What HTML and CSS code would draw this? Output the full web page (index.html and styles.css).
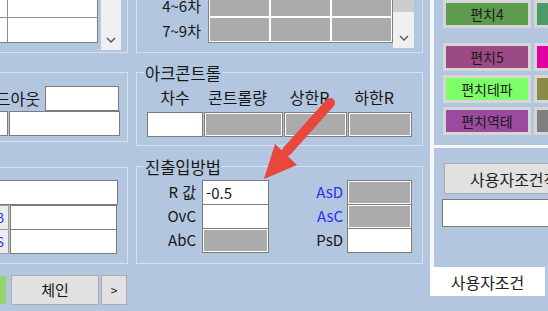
FILE: index.html
```html
<!DOCTYPE html>
<html lang="ko">
<head>
    <meta charset="UTF-8">
    <meta name="viewport" content="width=device-width, initial-scale=1.0">
    <title>진출입방법</title>
    <link rel="stylesheet" href="styles.css">
</head>
<body>
    <div class="window">
        <!-- left column (cut off by the window edge) -->
        <div class="col col-left">
            <div class="group top">
                <div class="table table-left">
                    <span class="cell"></span><span class="cell"></span>
                    <span class="cell"></span><span class="cell"></span>
                </div>
                <div class="vscroll">
                    <svg class="chev" width="10" height="6" viewBox="0 0 10 6"><polyline points="1,1 5,5 9,1"/></svg>
                </div>
            </div>
            <div class="group lead">
                <div class="line">
                    <span class="lbl-lead">리드아웃</span>
                    <span class="box box-lead"></span>
                </div>
                <div class="line">
                    <span class="box box-stub"></span>
                    <span class="box box-long"></span>
                </div>
            </div>
            <div class="group misc">
                <span class="box box-full"></span>
                <div class="line"><span class="tag">B</span><span class="box box-mid"></span></div>
                <div class="line"><span class="tag">S</span><span class="box box-mid"></span></div>
            </div>
            <div class="btn-row">
                <button class="btn btn-green"></button>
                <button class="btn btn-chain">체인</button>
                <button class="btn btn-next">&gt;</button>
            </div>
        </div>

        <!-- middle column -->
        <div class="col col-mid">
            <div class="group top">
                <div class="row-labels"><span>4~6차</span><span>7~9차</span></div>
                <div class="table table-mid">
                    <span class="cell"></span><span class="cell"></span><span class="cell"></span>
                    <span class="cell"></span><span class="cell"></span><span class="cell"></span>
                </div>
                <div class="vscroll">
                    <span class="thumb"></span>
                    <svg class="chev" width="10" height="6" viewBox="0 0 10 6"><polyline points="1,1 5,5 9,1"/></svg>
                </div>
            </div>
            <div class="group arc">
                <span class="legend">아크콘트롤</span>
                <div class="arc-grid">
                    <span class="hdr">차수</span>
                    <span class="hdr shift">콘트롤량</span>
                    <span class="hdr shift">상한R</span>
                    <span class="hdr shift">하한R</span>
                    <span class="box"></span>
                    <span class="box grey"></span>
                    <span class="box grey"></span>
                    <span class="box grey"></span>
                </div>
            </div>
            <div class="group io">
                <span class="legend">진출입방법</span>
                <div class="io-grid">
                    <span class="lbl">R 값</span><span class="box val">-0.5</span>
                    <span class="lbl r blue">AsD</span><span class="box grey"></span>
                    <span class="lbl">OvC</span><span class="box"></span>
                    <span class="lbl r blue">AsC</span><span class="box grey"></span>
                    <span class="lbl">AbC</span><span class="box grey"></span>
                    <span class="lbl r">PsD</span><span class="box"></span>
                </div>
            </div>
        </div>

        <!-- right column: tab pages -->
        <div class="col col-right">
            <div class="page page-top">
                <div class="crow"><span class="cbtn p4">편치4</span><span class="swatch s4"></span></div>
                <div class="crow gap"><span class="cbtn p5">편치5</span><span class="swatch s5"></span></div>
                <div class="crow"><span class="cbtn pt">편치테파</span><span class="swatch st"></span></div>
                <div class="crow"><span class="cbtn pr">편치역테</span><span class="swatch sr"></span></div>
            </div>
            <div class="page page-bottom">
                <button class="btn btn-apply">사용자조건적용</button>
                <span class="box box-user"></span>
            </div>
            <div class="tab">사용자조건</div>
        </div>
    </div>

    <svg class="arrow" width="548" height="311" viewBox="0 0 548 311">
        <line x1="330" y1="103" x2="287" y2="151" stroke="#e8473b" stroke-width="10" stroke-linecap="round"/>
        <polygon points="264,179 275,144 297,165" fill="#e8473b"/>
    </svg>
</body>
</html>
```

FILE: styles.css
```css
* { box-sizing: border-box; }
body { margin: 0; width: 548px; height: 311px; overflow: hidden; position: relative; background: #b2c6df; color: #161616; font-family: "Noto Sans CJK KR", "Noto Sans", sans-serif; font-size: 16px; line-height: 20px; }
button { font: inherit; color: inherit; margin: 0; padding: 0; }

.window { display: flex; align-items: flex-start; }
.col { display: flex; flex-direction: column; flex: none; }
.col-left { width: 148px; margin-left: -20px; }
.col-mid { width: 287px; margin-left: 8px; }
.col-right { width: 118px; margin-left: 7px; }

/* group boxes */
.group { border: 1px solid #d7e1ec; flex: none; }
.legend { display: block; width: max-content; height: 20px; margin: -10px 0 0 7px; padding: 0 1px; background: #b2c6df; font-size: 16.5px; }

.box { display: block; flex: none; height: 25px; background: #fff; border: 1px solid #7c7c7c; }
.box.grey { background: #ababab; box-shadow: inset 0 0 0 1px #fff; }
.line { display: flex; }

/* top groups with grids */
.top { margin-top: -20px; height: 73px; display: flex; align-items: flex-end; padding: 0 8px 9px 0; }
.col-left .top { padding-right: 6px; }
.table { display: grid; flex: none; }
.table-left { flex: 1; grid-template-columns: 25px 1fr; grid-auto-rows: 24px; gap: 1px; background: #8e8e8e; border: 1px solid #7e7e7e; }
.table-left .cell { background: #fff; }
.table-mid { grid-template-columns: repeat(3, 59px); grid-auto-rows: 23px; gap: 2px; padding: 1px; background: #fff; border: 1px solid #828282; }
.table-mid .cell { background: #ababab; }
.row-labels { flex: none; width: 64px; margin-right: 7px; display: flex; flex-direction: column; text-align: right; font-size: 15px; }
.row-labels span { height: 25px; line-height: 25px; }

.vscroll { flex: none; width: 20px; height: 70px; margin: 0 0 -7px 3px; padding-bottom: 7px; background: #f0f0f0; display: flex; flex-direction: column; align-items: center; justify-content: flex-end; }
.col-mid .vscroll { width: 21px; margin: 0 0 -5px 0; }
.thumb { width: 100%; height: 34px; margin-bottom: auto; background: #cdcdcd; }
.chev polyline { fill: none; stroke: #5f5f5f; stroke-width: 1.5; }

/* left column */
.lead { margin-top: 19px; height: 70px; padding-top: 13px; }
.lbl-lead { flex: none; width: 59px; margin-right: 5px; text-align: right; line-height: 25px; white-space: nowrap; }
.box-lead { width: 74px; }
.box-stub { width: 27px; margin-right: 1px; }
.box-long { width: 111px; }

.misc { margin-top: 25px; height: 97px; padding-top: 12px; }
.box-full { width: 137px; }
.tag { flex: none; width: 28px; height: 25px; margin-right: 1px; padding-right: 4px; background: #ececec; border: 1px solid #a0a0a0; color: #2d2df5; text-align: right; font-size: 13px; line-height: 23px; }
.box-mid { width: 107px; }
.misc .line + .line { margin-top: -1px; }

.btn-row { display: flex; margin-top: 11px; }
.btn { flex: none; height: 30px; background: #e1e1e1; border: 1px solid #adadad; }
.btn-green { width: 27px; margin-right: 4px; background: #92d36c; border-color: #c4c4c4; }
.btn-chain { width: 88px; margin-right: 2px; font-size: 15px; }
.btn-next { width: 26px; font-size: 12px; }

/* middle column */
.arc { margin-top: 19px; height: 74px; }
.arc-grid { display: grid; grid-template-columns: 56px 79px 63px 64px; grid-template-rows: 20px 25px; column-gap: 1px; row-gap: 5px; margin-top: 4px; padding-left: 10px; }
.hdr { text-align: center; white-space: nowrap; }
.hdr.shift { padding-right: 12px; }

.io { margin-top: 20px; height: 98px; }
.io-grid { display: grid; grid-template-columns: 65px 67px 78px 65px; grid-auto-rows: 24px; margin-top: 3px; font-size: 15px; }
.io-grid .lbl { display: flex; align-items: center; justify-content: flex-end; padding-right: 6px; }
.io-grid .lbl.r { padding-right: 4px; }
.blue { color: #2d2df5; }
.val { padding-left: 3px; line-height: 23px; }

/* right column */
.page { flex: none; border-left: 4px solid #f5f7fa; }
.page-top { height: 148px; padding-left: 9px; border-bottom: 3px solid #f5f7fa; }
.crow { display: flex; height: 28px; margin-top: 4px; }
.crow:first-child { margin-top: 0; }
.crow.gap { margin-top: 15px; }
.cbtn { flex: none; width: 88px; display: flex; align-items: center; justify-content: center; font-size: 14px; color: #1a1a1a; border: 3px solid #d6d6d6; }
.swatch { flex: none; width: 30px; margin-left: 3px; border: 3px solid #d6d6d6; }
.p4 { background: #5d9b4f; }
.s4 { background: #4c9a66; }
.p5 { background: #9c4a86; }
.s5 { background: #e000a0; }
.pt { background: #7dff6a; }
.st { background: #8a8c45; }
.pr { background: #9b4b9d; }
.sr { background: #808080; }

.page-bottom { height: 119px; padding: 15px 0 0 10px; }
.btn-apply { display: block; width: 155px; height: 31px; color: #222; white-space: nowrap; }
.box-user { width: 150px; height: 28px; margin: 5px 0 0 -2px; }
.tab { flex: none; width: 115px; height: 29px; background: #fff; display: flex; align-items: center; justify-content: center; color: #222; }

.arrow { position: absolute; left: 0; top: 0; pointer-events: none; }
```
